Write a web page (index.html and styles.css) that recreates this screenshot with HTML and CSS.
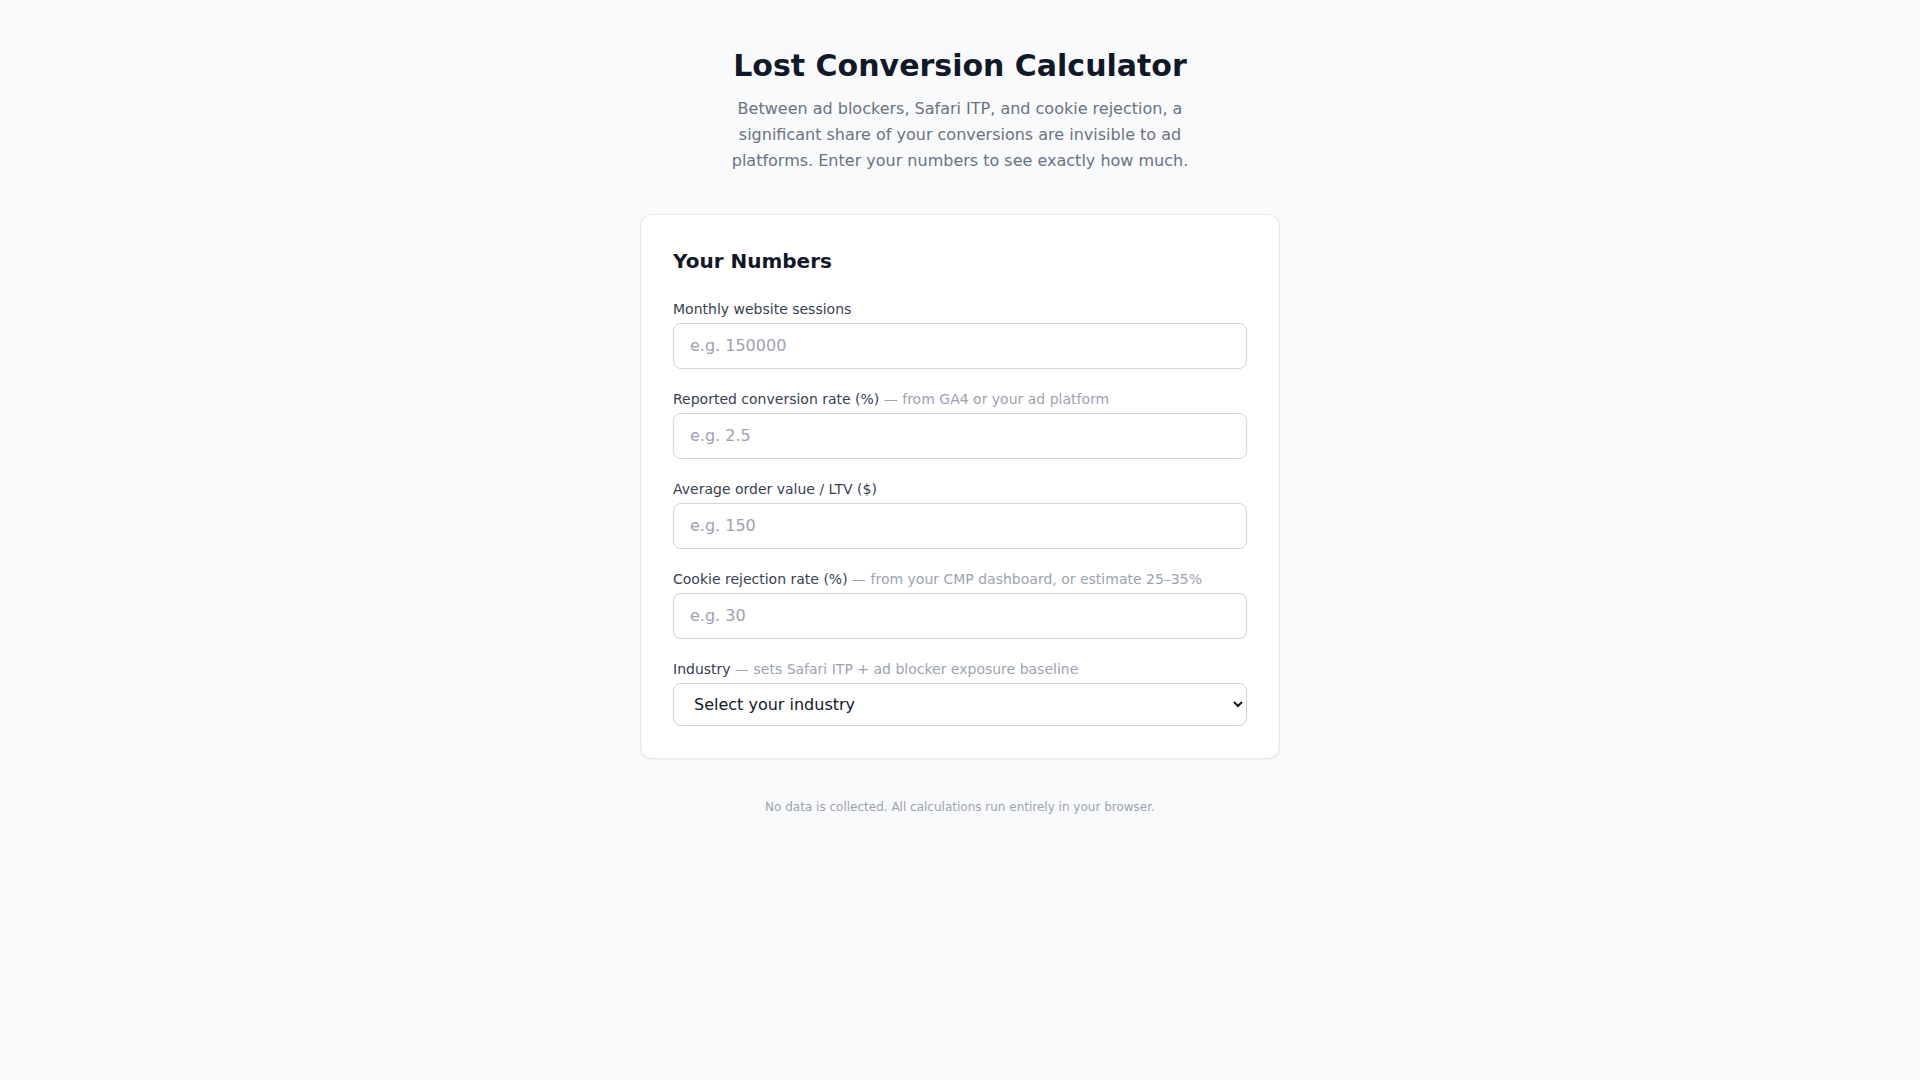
FILE: index.html
```html
<!DOCTYPE html>
<html lang="en">
<head>
    <meta charset="UTF-8">
    <meta name="viewport" content="width=device-width, initial-scale=1.0">
    <title>Lost Conversion Calculator</title>
    <link rel="stylesheet" href="styles.css">
</head>
<body>
    <div class="page">
        <div class="intro">
            <h1>Lost Conversion Calculator</h1>
            <p>Between ad blockers, Safari ITP, and cookie rejection, a significant share of your conversions are invisible to ad platforms. Enter your numbers to see exactly how much.</p>
        </div>

        <div class="card">
            <h2>Your Numbers</h2>

            <div class="fields">
                <div class="field">
                    <label for="sessions">Monthly website sessions</label>
                    <input type="number" id="sessions" placeholder="e.g. 150000">
                </div>

                <div class="field">
                    <label for="convRate">Reported conversion rate (%) <span class="hint">— from GA4 or your ad platform</span></label>
                    <input type="number" id="convRate" placeholder="e.g. 2.5">
                </div>

                <div class="field">
                    <label for="aov">Average order value / LTV ($)</label>
                    <input type="number" id="aov" placeholder="e.g. 150">
                </div>

                <div class="field">
                    <label for="rejection">Cookie rejection rate (%) <span class="hint">— from your CMP dashboard, or estimate 25–35%</span></label>
                    <input type="number" id="rejection" placeholder="e.g. 30">
                </div>

                <div class="field">
                    <label for="industry">Industry <span class="hint">— sets Safari ITP + ad blocker exposure baseline</span></label>
                    <select id="industry">
                        <option value="">Select your industry</option>
                        <option value="ecommerce">E-commerce</option>
                        <option value="saas">SaaS / B2B</option>
                        <option value="finance">Finance</option>
                        <option value="health">Health</option>
                        <option value="other">Other</option>
                    </select>
                </div>
            </div>
        </div>

        <p class="footnote">No data is collected. All calculations run entirely in your browser.</p>
    </div>
</body>
</html>
```

FILE: styles.css
```css
* {
    margin: 0;
    padding: 0;
    box-sizing: border-box;
}

body {
    font-family: "DejaVu Sans", sans-serif;
    background-color: #f9fafb;
    color: #111827;
}

.page {
    max-width: 640px;
    margin: 0 auto;
    padding: 48px 0;
}

.intro {
    text-align: center;
    margin-bottom: 40px;
}

.intro h1 {
    font-size: 30px;
    line-height: 36px;
    font-weight: bold;
    color: #111827;
    margin-bottom: 12px;
}

.intro p {
    max-width: 480px;
    margin: 0 auto;
    font-size: 16px;
    line-height: 26px;
    color: #6b7280;
}

.card {
    background: white;
    border: 1px solid #e5e7eb;
    border-radius: 12px;
    box-shadow: 0 1px 2px rgba(0, 0, 0, 0.05);
    padding: 32px;
}

.card h2 {
    font-size: 20px;
    line-height: 28px;
    font-weight: bold;
    color: #111827;
    margin-bottom: 24px;
}

.fields {
    display: flex;
    flex-direction: column;
    gap: 20px;
}

.field label {
    display: block;
    font-size: 14px;
    line-height: 20px;
    color: #374151;
    margin-bottom: 4px;
}

.field .hint {
    color: #9ca3af;
}

.field input,
.field select {
    display: block;
    width: 100%;
    font-family: inherit;
    font-size: 16px;
    line-height: 20px;
    color: #111827;
    background: white;
    border: 1px solid #d1d5db;
    border-radius: 8px;
    outline: none;
}

.field input {
    padding: 12px 16px;
}

.field input::placeholder {
    color: #9ca3af;
}

.field input::-webkit-outer-spin-button,
.field input::-webkit-inner-spin-button {
    -webkit-appearance: none;
}

.field select {
    padding: 10px 16px;
    height: 43px;
}

.footnote {
    margin-top: 40px;
    text-align: center;
    font-size: 12px;
    line-height: 16px;
    color: #9ca3af;
}
```
